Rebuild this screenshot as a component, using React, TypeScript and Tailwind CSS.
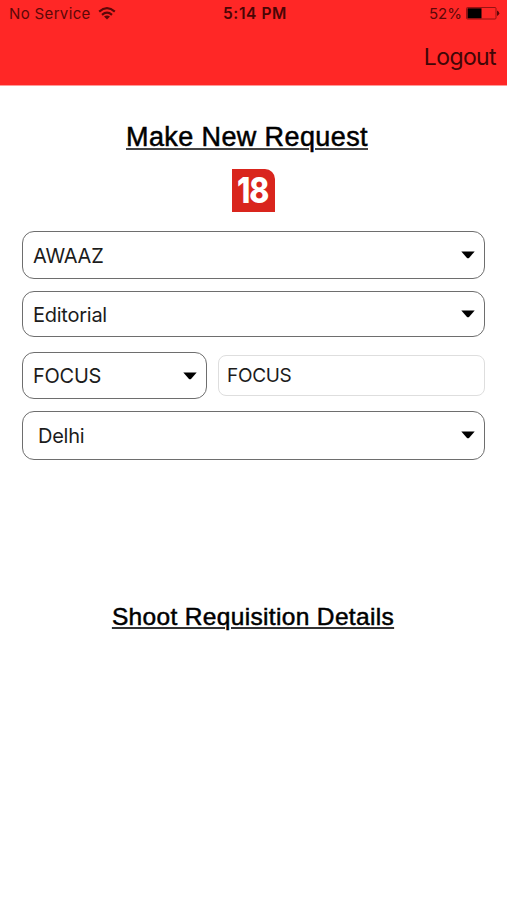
import clsx from 'clsx';

interface SelectBoxProps {
    value: string;
    className?: string;
    caretClassName?: string;
}

const Caret: React.FC<{ className?: string }> = ({ className }) => (
    <svg
        viewBox="0 0 14 8"
        className={clsx('h-2 w-3.5 shrink-0', className)}
        aria-hidden="true"
    >
        <path d="M0.3 0.5h13.4L8 6.9q-1 .9-2 0z" fill="#000" />
    </svg>
);

const SelectBox: React.FC<SelectBoxProps> = ({
    value,
    className,
    caretClassName,
}) => (
    <button
        type="button"
        className={clsx(
            'flex items-center justify-between rounded-[12px] border border-[#6e6e6e] bg-white pr-[9px] text-left text-[20px] leading-6 tracking-[-0.25px] text-[#1c1c1c]',
            className
        )}
    >
        <span>{value}</span>
        <Caret className={caretClassName} />
    </button>
);

const WifiIcon: React.FC = () => (
    <svg
        viewBox="0 0 18 13"
        className="ml-[7px] h-[13px] w-[18px]"
        fill="none"
        stroke="#5c0808"
        strokeWidth="2.2"
        aria-hidden="true"
    >
        <path d="M1.2 4.6Q9-2.2 16.8 4.6" />
        <path d="M4 7.8q5-4.2 10 0" />
        <path d="M9 12.4 6 9.6q3-2.2 6 0z" fill="#5c0808" stroke="none" />
    </svg>
);

const BatteryIcon: React.FC = () => (
    <svg
        viewBox="0 0 34 13"
        className="ml-[4px] h-[13px] w-[34px]"
        aria-hidden="true"
    >
        <rect
            x="0.5"
            y="0.5"
            width="29.5"
            height="11.5"
            rx="1"
            fill="none"
            stroke="#8a1010"
            strokeWidth="0.9"
        />
        <rect x="1.5" y="1.3" width="14" height="10" fill="#000" />
        <path d="M31 3.6q2.3 1 2.3 2.7T31 9z" fill="#5c0808" />
    </svg>
);

const BrandLogo: React.FC = () => (
    <div className="flex h-[43px] w-[43px] items-center justify-center rounded-tr-[10px] bg-[#d9251d] text-[36px] leading-[43px] font-extrabold text-white">
        <span className="-ml-[2px] scale-x-[0.84] tracking-[-1.2px]">18</span>
    </div>
);

/**
 * Status bar and navigation bar at the top of the screen.
 */
const Header: React.FC = () => (
    <header className="h-[86px] border-b border-[#ff9a98] bg-[#ff2726] text-[#5c0808]">
        <div className="grid h-[27px] grid-cols-3 items-center pr-[7px] pl-[9px] text-[15px] leading-none">
            <div className="flex items-center tracking-[0.35px]">
                No Service
                <WifiIcon />
            </div>
            <div className="pl-px text-center text-[15.5px] font-semibold tracking-[0.6px] text-[#4a0505]">
                5:14 PM
            </div>
            <div className="flex items-center justify-end">
                52%
                <BatteryIcon />
            </div>
        </div>
        <div className="flex justify-end pt-[14px] pr-[11px]">
            <button
                type="button"
                className="text-[23px] leading-8 tracking-[-0.6px] text-[#420606]"
            >
                Logout
            </button>
        </div>
    </header>
);

export default function App() {
    return (
        <div className="h-[900px] w-[507px] overflow-hidden bg-white font-['Inter',sans-serif]">
            <Header />
            <main className="flex flex-col px-[22px]">
                <h1 className="mt-[36px] mr-[13px] self-center font-['Liberation_Sans',sans-serif] text-[27px] leading-[30px] tracking-[0.4px] text-black underline decoration-[#444] decoration-2 underline-offset-2 [-webkit-text-stroke:0.5px_black]">
                    Make New Request
                </h1>
                <div className="mt-[17px] flex justify-center">
                    <BrandLogo />
                </div>
                <SelectBox
                    value="AWAAZ"
                    className="mt-[19px] h-[48px] pt-[2px] pl-[10px]"
                    caretClassName="-mt-[3px]"
                />
                <SelectBox
                    value="Editorial"
                    className="mt-[12px] h-[46px] pt-[2px] pl-[10px]"
                    caretClassName="-mt-[3px]"
                />
                <div className="mt-[15px] flex items-center gap-[11px]">
                    <SelectBox
                        value="FOCUS"
                        className="h-[47px] w-[185px] pt-px pl-[10px]"
                    />
                    <input
                        type="text"
                        defaultValue="FOCUS"
                        className="h-[41px] min-w-0 flex-1 rounded-[8px] border border-[#dedede] bg-white pl-[8px] text-[19px] tracking-[-0.3px] text-[#1c1c1c] outline-none"
                    />
                </div>
                <SelectBox
                    value="Delhi"
                    className="mt-[12px] h-[49px] pt-px pl-[15px]"
                    caretClassName="-mt-[3px]"
                />
                <h2 className="mt-[142px] mr-px self-center font-['Liberation_Sans',sans-serif] text-[24.5px] leading-[30px] tracking-[0.34px] text-black underline decoration-[#333] decoration-2 underline-offset-2 [-webkit-text-stroke:0.5px_black]">
                    Shoot Requisition Details
                </h2>
            </main>
        </div>
    );
}
